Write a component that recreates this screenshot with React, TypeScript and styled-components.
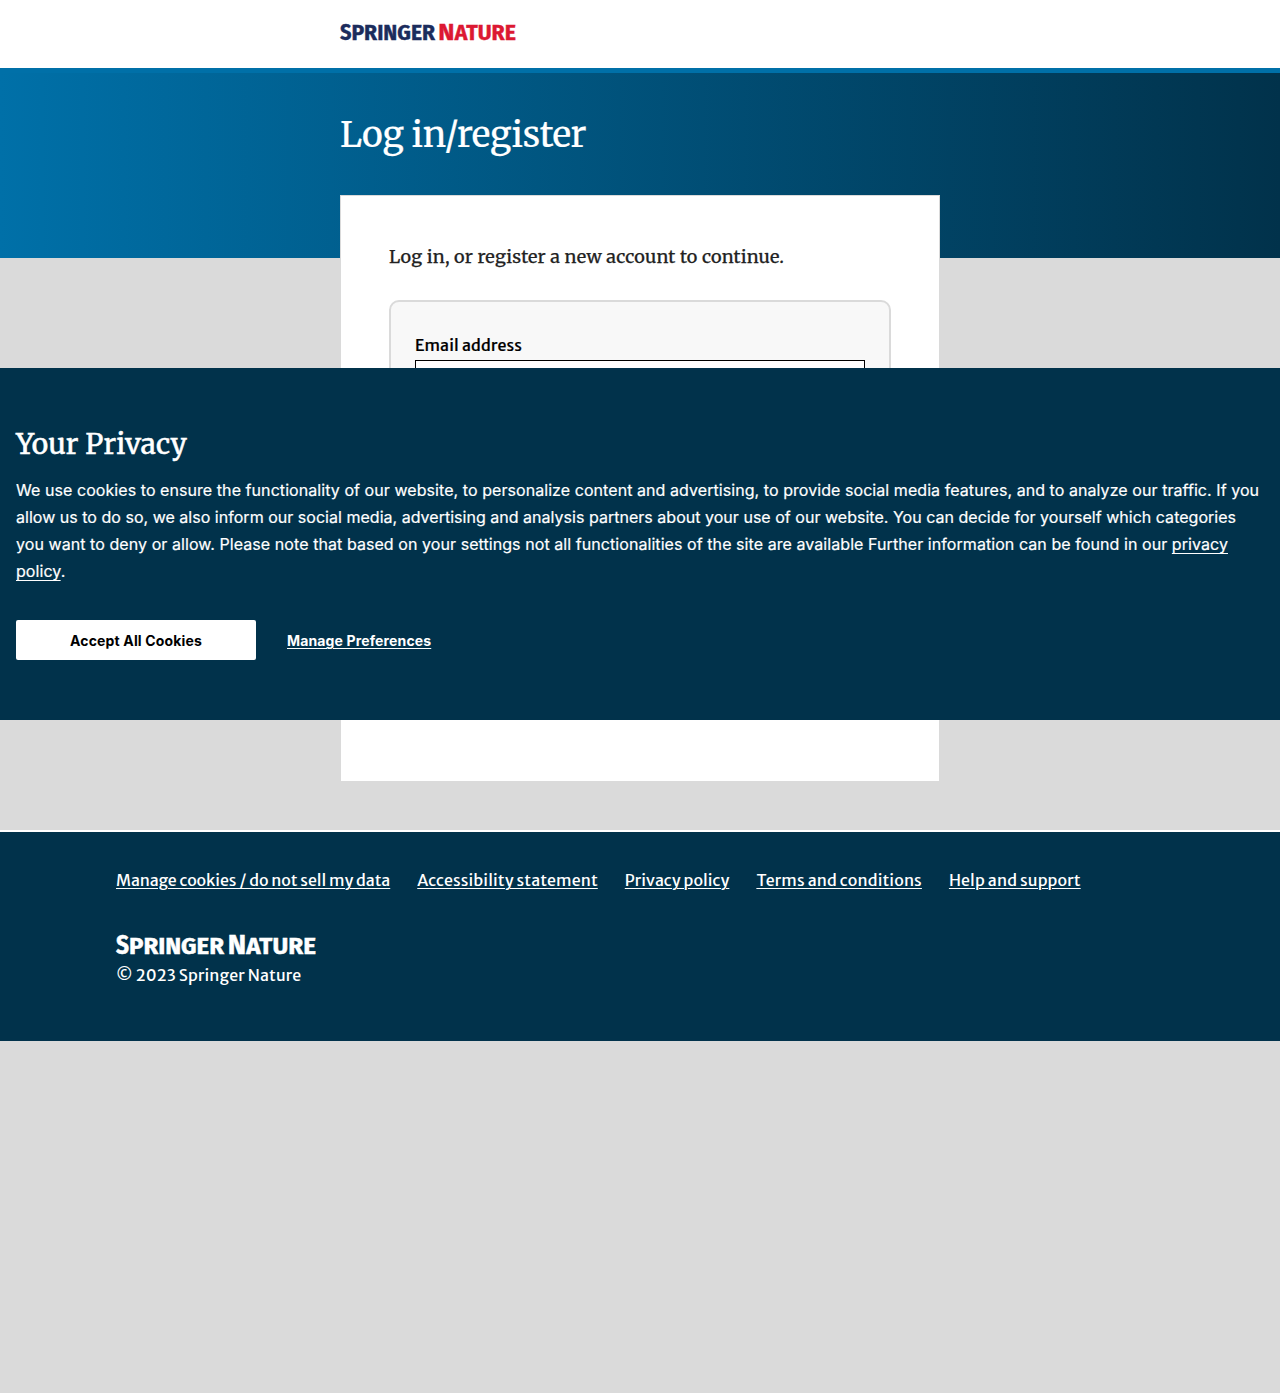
import React from "react";
import styled, { createGlobalStyle } from "styled-components";

const serif = '"Merriweather", "DejaVu Serif Condensed", "DejaVu Serif", serif';
const sans = '"Merriweather Sans", "Noto Sans", sans-serif';
const navy = "#01324b";

const GlobalStyle = createGlobalStyle`
  *, *::before, *::after { box-sizing: border-box; }
  body { margin: 0; background: #dadada; font-family: ${sans}; }
  h1, h2, p, ul { margin: 0; padding: 0; font-weight: 400; }
`;

const Page = styled.div`
  position: relative;
  min-height: 1393px;
  overflow: hidden;
`;

const Header = styled.header`
  height: 68px;
  padding-top: 24px;
  background: #fff;
`;

const Column = styled.div`
  width: 600px;
  margin: 0 auto;
`;

const Main = styled.main`
  height: 762px;
  border-top: 5px solid #0070a8;
  background: linear-gradient(to right, #0070a8, ${navy}) 0 0 / 100% 185px no-repeat;
`;

const Title = styled.h1`
  height: 122px;
  padding-top: 39px;
  color: #fff;
  font: 400 35.4px/46px ${serif};
  letter-spacing: -0.34px;
  -webkit-text-stroke: 0.2px #fff;
  white-space: nowrap;
`;

const Card = styled.section`
  height: 587px;
  padding: 48px;
  background: #fff;
  border: 1px solid #dadada;
`;

const Intro = styled.p`
  height: 56px;
  color: #222;
  font: 400 18px/26px ${serif};
  letter-spacing: 0.18px;
  -webkit-text-stroke: 0.25px #222;
  white-space: nowrap;
`;

const LoginForm = styled.form`
  height: 320px;
  padding: 30px 24px;
  background: #f8f8f8;
  border: 2px solid #dadada;
  border-radius: 10px;
`;

const Field = styled.label`
  display: flex;
  flex-direction: column;
  gap: 2px;
  color: #000;
  font: 400 16px/26px ${sans};
  letter-spacing: 0.15px;
  -webkit-text-stroke: 0.2px #000;
`;

const Input = styled.input`
  width: 100%;
  height: 40px;
  border: 1px solid #000;
  background: #fff;
`;

const Banner = styled.section`
  position: absolute;
  top: 368px;
  left: 0;
  right: 0;
  height: 352px;
  padding: 57px 16px 0;
  background: ${navy};
  color: #fff;
  font: 400 16px/27px Inter, sans-serif;
`;

const BannerTitle = styled.h2`
  height: 52px;
  font: 400 28px/39px ${serif};
  letter-spacing: 0.14px;
  -webkit-text-stroke: 0.5px #fff;
`;

const BannerText = styled.p`
  height: 143px;
  -webkit-text-stroke: 0.2px #fff;
`;

const Tracked = styled.span<{ $spacing: number }>`
  letter-spacing: ${(p) => p.$spacing}px;
`;

const TextLink = styled.a`
  color: inherit;
  text-decoration: underline;
  text-decoration-thickness: 1px;
  text-underline-offset: 3px;
`;

const Actions = styled.div`
  display: flex;
  align-items: center;
  gap: 31px;
`;

const Accept = styled.button`
  width: 240px;
  height: 40px;
  border: 0;
  border-radius: 2px;
  padding: 2px 0 0;
  background: #fff;
  color: #000;
  font: 700 14px/20px Inter, sans-serif;
  letter-spacing: 0.15px;
`;

const Manage = styled(TextLink)`
  padding-top: 2px;
  font: 700 14px/20px Inter, sans-serif;
  letter-spacing: 0.14px;
  text-underline-offset: 2px;
`;

const Footer = styled.footer`
  height: 211px;
  padding: 34px 116px 0;
  border-top: 2px solid #fff;
  background: ${navy};
  color: #fff;
  font: 400 16px/28px ${sans};
`;

const FooterLinks = styled.nav`
  display: flex;
  gap: 27px;
  height: 69px;
`;

const FooterLink = styled(TextLink)<{ $spacing: number }>`
  white-space: nowrap;
  letter-spacing: ${(p) => p.$spacing}px;
  text-underline-offset: 2px;
`;

const Copyright = styled.p`
  margin-top: 6px;
  letter-spacing: 0.12px;
`;

const LogoSvg = styled.svg`
  display: block;
  overflow: visible;
  font-family: "Fira Sans", "Open Sans", sans-serif;
  font-weight: 700;
`;

type LogoProps = { width: number; first: string; second: string };

function Logo({ width, first, second }: LogoProps) {
  return (
    <LogoSvg width={width} height={width * 0.1} viewBox="0 0 200 20" role="img" aria-label="Springer Nature">
      <g fill={first} stroke={first} strokeWidth="0.5">
        <text x="0" y="18.7" fontSize="27" textLength="13" lengthAdjust="spacingAndGlyphs">S</text>
        <text x="13" y="18.7" fontSize="24" textLength="95" lengthAdjust="spacingAndGlyphs">PRINGER</text>
      </g>
      <g fill={second} stroke={second} strokeWidth="0.5">
        <text x="111.8" y="18.7" fontSize="27" textLength="18.4" lengthAdjust="spacingAndGlyphs">N</text>
        <text x="130.3" y="18.7" fontSize="24" textLength="69.6" lengthAdjust="spacingAndGlyphs">ATURE</text>
      </g>
    </LogoSvg>
  );
}

const links = [
  { label: "Manage cookies / do not sell my data", spacing: -0.062 },
  { label: "Accessibility statement", spacing: 0.095 },
  { label: "Privacy policy", spacing: 0.06 },
  { label: "Terms and conditions", spacing: 0.12 },
  { label: "Help and support", spacing: 0.12 },
];

export default function App() {
  return (
    <Page>
      <GlobalStyle />
      <Header>
        <Column>
          <Logo width={176} first="#1b2c5c" second="#dc1832" />
        </Column>
      </Header>
      <Main>
        <Column>
          <Title>Log in/register</Title>
          <Card>
            <Intro>Log in, or register a new account to continue.</Intro>
            <LoginForm>
              <Field>
                Email address
                <Input type="email" />
              </Field>
            </LoginForm>
          </Card>
        </Column>
      </Main>
      <Footer>
        <FooterLinks>
          {links.map((l) => (
            <FooterLink key={l.label} $spacing={l.spacing}>{l.label}</FooterLink>
          ))}
        </FooterLinks>
        <Logo width={200} first="#fff" second="#fff" />
        <Copyright>© 2023 Springer Nature</Copyright>
      </Footer>
      <Banner>
        <BannerTitle>Your Privacy</BannerTitle>
        <BannerText>
          <Tracked $spacing={0.064}>
            We use cookies to ensure the functionality of our website, to personalize content and advertising, to
            provide social media features, and to analyze our traffic. If you{" "}
          </Tracked>
          <Tracked $spacing={0.022}>
            allow us to do so, we also inform our social media, advertising and analysis partners about your use of our
            website. You can decide for yourself which categories{" "}
          </Tracked>
          <Tracked $spacing={0.068}>
            you want to deny or allow. Please note that based on your settings not all functionalities of the site are
            available Further information can be found in our <TextLink>privacy policy</TextLink>.
          </Tracked>
        </BannerText>
        <Actions>
          <Accept>Accept All Cookies</Accept>
          <Manage>Manage Preferences</Manage>
        </Actions>
      </Banner>
    </Page>
  );
}
